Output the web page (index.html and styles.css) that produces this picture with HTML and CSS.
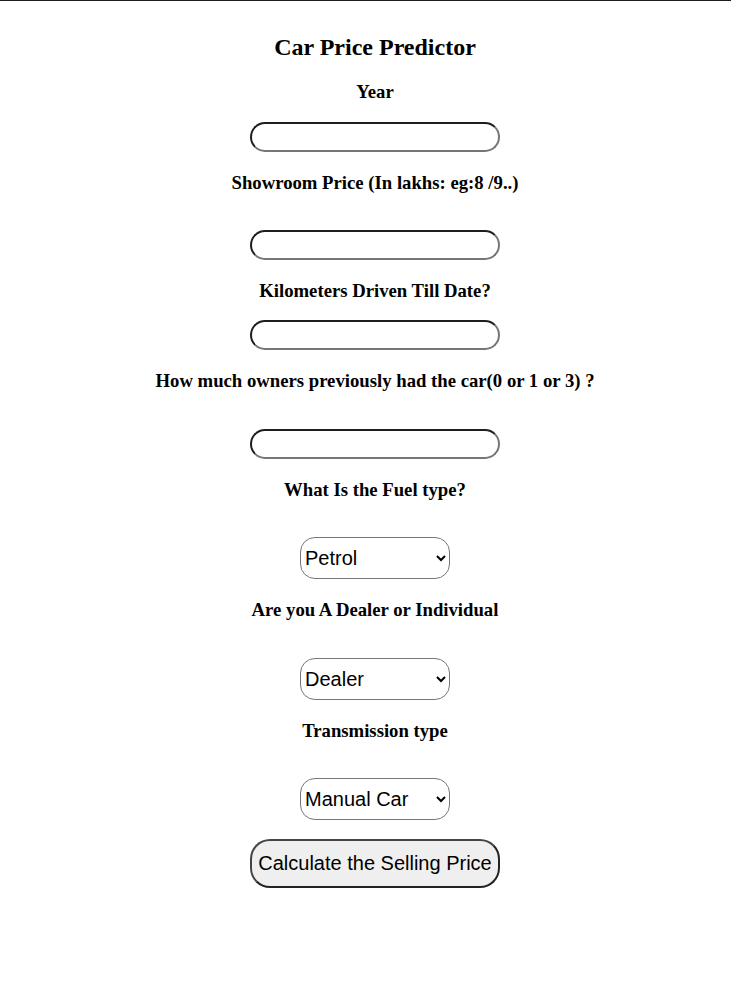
FILE: index.html
```html
<!DOCTYPE html>
<html>
<head>
<meta charset="utf-8">
<title>Car Price Predictor</title>
<link rel="stylesheet" href="styles.css">
</head>
<body>
<form class="form">
  <h2 class="title">Car Price Predictor</h2>
  <label class="label">Year</label>
  <input class="field" type="text">
  <label class="label label-spaced">Showroom Price (In lakhs: eg:8 /9..)</label>
  <input class="field" type="text">
  <label class="label label-tight">Kilometers Driven Till Date?</label>
  <input class="field" type="text">
  <label class="label label-spaced label-wide">How much owners previously had the car(0 or 1 or 3) ?</label>
  <input class="field" type="text">
  <label class="label label-spaced">What Is the Fuel type?</label>
  <select class="choice"><option>Petrol</option><option>Diesel</option><option>CNG</option></select>
  <label class="label label-spaced label-wide">Are you A Dealer or Individual</label>
  <select class="choice"><option>Dealer</option><option>Individual</option></select>
  <label class="label label-spaced">Transmission type</label>
  <select class="choice"><option>Manual Car</option><option>Automatic Car</option></select>
  <button class="submit" type="button">Calculate the Selling Price</button>
</form>
</body>
</html>
```
FILE: styles.css
```css
html, body {
  margin: 0;
  padding: 0;
  background: #ffffff;
}
body {
  border-top: 1px solid #1e1e1e;
  font-family: "Liberation Serif", "Times New Roman", serif;
  color: #000;
}
.form {
  display: flex;
  flex-direction: column;
  align-items: center;
  gap: 20px;
  padding-top: 32px;
  padding-left: 19px;
}
.title {
  margin: 0;
  font-size: 24px;
  line-height: 28px;
  font-weight: bold;
}
.label {
  font-size: 18.72px;
  line-height: 22px;
  font-weight: bold;
  margin-bottom: -1px;
}
.label-tight {
  margin-bottom: -2px;
}
.label-spaced {
  margin-bottom: 16px;
}
.label-wide {
  margin-bottom: 17px;
}
.field {
  box-sizing: border-box;
  width: 250px;
  height: 30px;
  border-width: 2px;
  border-style: solid;
  border-color: #1e1e1e #767676 #767676 #1e1e1e;
  border-radius: 15px;
  background: #fff;
  padding: 0 10px;
  margin: 0;
}
.choice {
  box-sizing: border-box;
  width: 150px;
  height: 42px;
  border: 1px solid #767676;
  border-radius: 15px;
  background: #fff;
  font-family: "Liberation Sans", Arial, sans-serif;
  font-size: 20px;
  color: #000;
  padding: 0;
  margin: 0;
}
.submit {
  box-sizing: border-box;
  width: 250px;
  height: 49px;
  margin: -1px 0 0;
  border: 2px solid #222;
  border-color: #444 #222 #222 #444;
  border-radius: 20px;
  background: #efefef;
  font-family: "Liberation Sans", Arial, sans-serif;
  font-size: 20px;
  color: #000;
  padding: 0;
}
```
